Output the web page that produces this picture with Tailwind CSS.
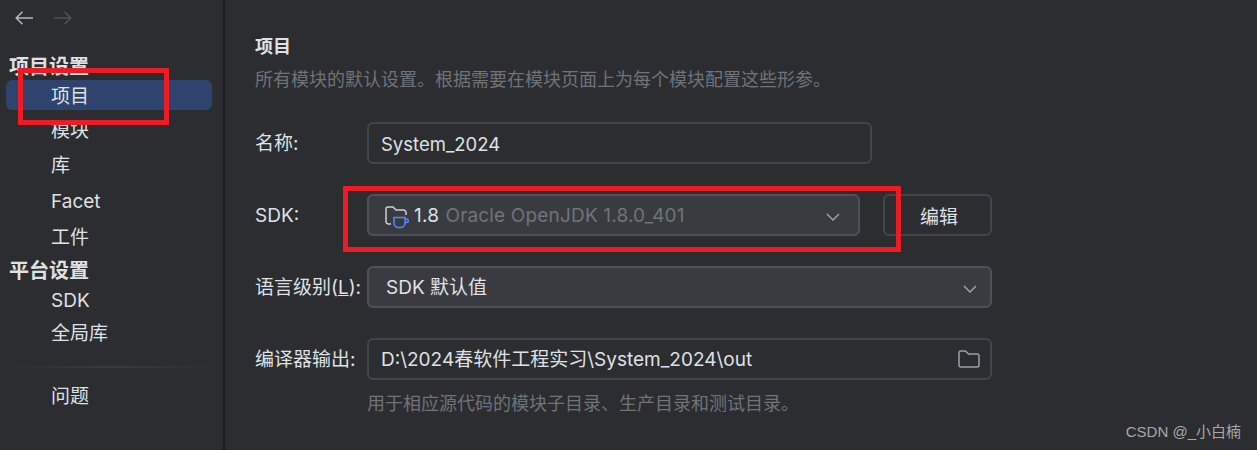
<!DOCTYPE html>
<html lang="en">
<head>
    <meta charset="UTF-8">
    <meta name="viewport" content="width=device-width, initial-scale=1.0">
    <script src="https://cdn.jsdelivr.net/npm/@tailwindcss/browser@4"></script>
</head>
<body class="bg-[#2b2d30] overflow-hidden">
    <div class="relative flex w-[1257px] h-[450px] bg-[#2b2d30] text-[#dfe1e5] text-[19px] font-['Inter','Noto_Sans_CJK_SC',sans-serif]">

        <!-- Sidebar -->
        <aside class="w-[225px] h-full shrink-0 border-r-2 border-[#1e1f22] flex flex-col">
            <div class="h-[36px] pl-[15px] flex items-center gap-[21px]">
                <svg class="w-[18px] h-[14px]" viewBox="0 0 18 14" fill="none" stroke="#b4b8bf" stroke-width="1.5"><path d="M18 7H1.2M7.5 .7L1.2 7l6.3 6.3"/></svg>
                <svg class="w-[18px] h-[14px]" viewBox="0 0 18 14" fill="none" stroke="#4f5157" stroke-width="1.5"><path d="M0 7h16.8M10.5 .7L16.8 7l-6.3 6.3"/></svg>
            </div>
            <div class="h-[30px] mt-[15px] pl-[9px] leading-[32px] font-bold text-[20px]">项目设置</div>
            <div class="h-[30px] ml-[6px] w-[206px] mt-[-1px] pl-[45px] leading-[34px] rounded-md bg-[#2e436e]">项目</div>
            <div class="h-[36px] pl-[51px] leading-[39px] mt-[1px]">模块</div>
            <div class="h-[36px] pl-[51px] leading-[38px]">库</div>
            <div class="h-[36px] pl-[51px] leading-[38px]">Facet</div>
            <div class="h-[36px] pl-[51px] leading-[38px]">工件</div>
            <div class="h-[30px] pl-[9px] leading-[32px] font-bold text-[20px]">平台设置</div>
            <div class="h-[32px] pl-[51px] leading-[32px]">SDK</div>
            <div class="h-[34px] pl-[51px] leading-[34px]">全局库</div>
            <div class="h-[2px] ml-[5px] w-[210px] mt-[15px] bg-gradient-to-r from-[#2b2d30] via-[#393b40] to-[#2b2d30]"></div>
            <div class="h-[34px] pl-[51px] leading-[34px] mt-[12px]">问题</div>
        </aside>

        <!-- Main panel -->
        <main class="flex-1 pl-[30px] pt-[32px]">
            <h1 class="h-[30px] leading-[30px] font-bold text-[18px]">项目</h1>
            <p class="h-[24px] leading-[24px] mt-[6px] text-[#6f737a] text-[18px]">所有模块的默认设置。根据需要在模块页面上为每个模块配置这些形参。</p>

            <div class="flex items-center h-[42px] mt-[30px]">
                <span class="w-[112px] pt-[3px]">名称:</span>
                <div class="w-[505px] h-[42px] px-[12px] pt-[3px] flex items-center rounded-md border-2 border-[#43454a] text-[18.5px]">System_2024</div>
            </div>

            <div class="flex items-center h-[42px] mt-[30px]">
                <span class="w-[112px] pt-[3px]">SDK:</span>
                <div class="w-[493px] h-[42px] pl-[16px] pr-[18px] pt-[3px] flex items-center rounded-md border-2 border-[#4e5157] bg-[#393b40]">
                    <svg class="w-[24px] h-[24px] shrink-0" viewBox="0 0 24 24" fill="none" stroke-width="1.5">
                        <path d="M6 19H3.5A2.5 2.5 0 0 1 1 16.500V4a2 2 0 0 1 2-2h5l3 3h7.500A2.500 2.500 0 0 1 21 7.500V10" stroke="#ced0d6"/>
                        <path d="M9 12.500h11v5.500a4.500 4.500 0 0 1-4.500 4.500h-2A4.500 4.500 0 0 1 9 18z" stroke="#548af7"/>
                        <path d="M20 14h1.500a1.750 1.750 0 0 1 0 3.500H20" stroke="#548af7"/>
                    </svg>
                    <span class="ml-[5px] tracking-[0.3px]">1.8</span>
                    <span class="ml-[6px] text-[#6f737a] tracking-[0.17px]">Oracle OpenJDK 1.8.0_401</span>
                    <svg class="ml-auto w-[14px] h-[8px]" viewBox="0 0 14 8" fill="none" stroke="#9da0a8" stroke-width="1.5"><path d="M1 1l6 6 6-6"/></svg>
                </div>
                <button class="w-[109px] h-[42px] ml-[23px] pt-[6px] pl-[3px] rounded-md border-2 border-[#43454a]">编辑</button>
            </div>

            <div class="flex items-center h-[42px] mt-[30px]">
                <span class="w-[112px] pt-[3px]">语言级别(<span class="underline">L</span>):</span>
                <div class="w-[625px] h-[42px] pl-[17px] pr-[13px] pt-[3px] flex items-center rounded-md border-2 border-[#4e5157] bg-[#393b40]">
                    <span>SDK 默认值</span>
                    <svg class="ml-auto w-[14px] h-[8px]" viewBox="0 0 14 8" fill="none" stroke="#9da0a8" stroke-width="1.5"><path d="M1 1l6 6 6-6"/></svg>
                </div>
            </div>

            <div class="flex items-center h-[42px] mt-[30px]">
                <span class="w-[112px] pt-[3px]">编译器输出:</span>
                <div class="w-[625px] h-[42px] pl-[12px] pr-[10px] pt-[3px] flex items-center rounded-md border-2 border-[#43454a]">
                    <span>D:\2024春软件工程实习\System_2024\out</span>
                    <svg class="ml-auto -mt-[3px] w-[22px] h-[20px]" viewBox="0 0 22 20" fill="none" stroke="#9da0a8" stroke-width="1.5"><path d="M1 4a2 2 0 0 1 2-2h4.500L10.500 5H19a2 2 0 0 1 2 2v9a2 2 0 0 1-2 2H3a2 2 0 0 1-2-2z"/></svg>
                </div>
            </div>

            <p class="ml-[112px] mt-[11px] h-[26px] leading-[26px] text-[#6f737a] text-[18px]">用于相应源代码的模块子目录、生产目录和测试目录。</p>
        </main>

        <!-- Annotation boxes and watermark drawn over the screenshot -->
        <div class="absolute left-[18px] top-[68px] w-[151px] h-[57px] border-[5px] border-[#ed1c24]"></div>
        <div class="absolute left-[343px] top-[186px] w-[558px] h-[66px] border-[5px] border-[#ed1c24]"></div>
        <div class="absolute right-[16px] bottom-[8px] text-[15px] leading-[20px] text-[#a8a8a8] font-['Liberation_Sans','Noto_Sans_CJK_SC',sans-serif]">CSDN @_小白楠</div>
    </div>
</body>
</html>
